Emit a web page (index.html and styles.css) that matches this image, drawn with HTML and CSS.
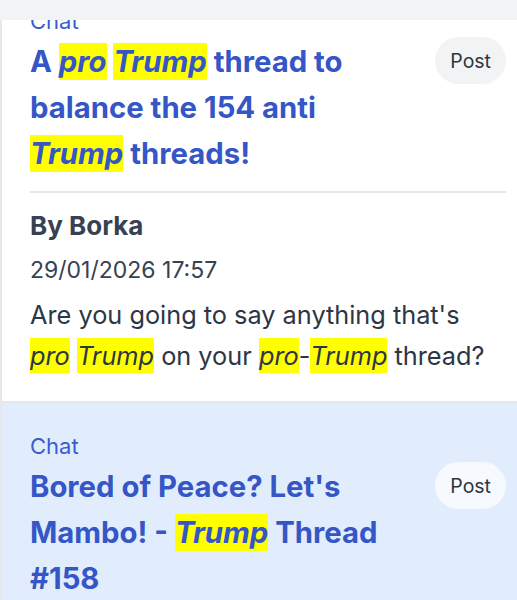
FILE: index.html
```html
<!DOCTYPE html>
<html>
<head>
	<meta charset="UTF-8">
	<title>Threads</title>
	<link rel="stylesheet" href="styles.css">
</head>
<body>
	<div class="topbar"></div>
	<div class="feed">
		<div class="thread">
			<div class="forum">Chat</div>
			<div class="thread-head">
				<h2 class="thread-title">A <mark>pro</mark> <mark>Trump</mark> thread to balance the 154 anti <mark>Trump</mark> threads!</h2>
				<button class="post-btn">Post</button>
			</div>
			<div class="reply">
				<div class="author">By Borka</div>
				<div class="date">29/01/2026 17:57</div>
				<p class="excerpt">Are you going to say anything that's <mark>pro</mark> <mark>Trump</mark> on your <mark>pro</mark>-<mark>Trump</mark> thread?</p>
			</div>
		</div>
		<div class="thread unread">
			<div class="forum">Chat</div>
			<div class="thread-head">
				<h2 class="thread-title">Bored of Peace? Let's Mambo! - <mark>Trump</mark> Thread #158</h2>
				<button class="post-btn">Post</button>
			</div>
		</div>
	</div>
</body>
</html>
```

FILE: styles.css
```css
body {
	font-family: Inter, "Noto Sans", sans-serif;
	margin: 0;
	padding: 0;
	background: #fff;
	overflow: hidden;
}
.topbar {
	height: 20px;
	background: #f2f3f5;
	position: relative;
	z-index: 2;
}
.feed {
	border-left: 2px solid #e5e7eb;
}
.thread {
	padding: 31px 11px 25px 28px;
	background: #fff;
	border-bottom: 2px solid #e5e7eb;
}
.thread:first-child {
	margin-top: -44px;
}
.thread.unread {
	padding-top: 29px;
	background: #e1edfd;
}
.forum {
	font-size: 22px;
	line-height: 28px;
	color: #3a5ccc;
	margin-bottom: 4px;
}
.thread-head {
	display: flex;
	align-items: flex-start;
	gap: 30px;
}
.thread-title {
	flex: 1;
	margin: 0;
	font-size: 29.3px;
	line-height: 46px;
	font-weight: 700;
	color: #3456c6;
}
mark {
	background: #ffff00;
	color: inherit;
	font-style: italic;
	padding: 1px 0;
}
.post-btn {
	flex: none;
	margin-top: -2px;
	height: 47px;
	padding: 0 15px;
	border: none;
	border-radius: 24px;
	background: #f2f3f5;
	color: #2f3540;
	font-family: inherit;
	font-size: 19.5px;
}
.unread .post-btn {
	background: #f6f9fe;
}
.reply {
	margin-top: 14px;
	border-top: 2px solid #e5e7eb;
	padding-top: 14px;
	padding-right: 16px;
	color: #2d3644;
}
.author {
	font-size: 26px;
	line-height: 38px;
	font-weight: 700;
	color: #374151;
}
.date {
	margin-top: 4px;
	font-size: 23px;
	line-height: 42px;
	color: #374151;
}
.excerpt {
	margin: 3px 0 0;
	font-size: 25.3px;
	line-height: 41px;
}
.excerpt mark {
	padding: 2px 0;
}
```
